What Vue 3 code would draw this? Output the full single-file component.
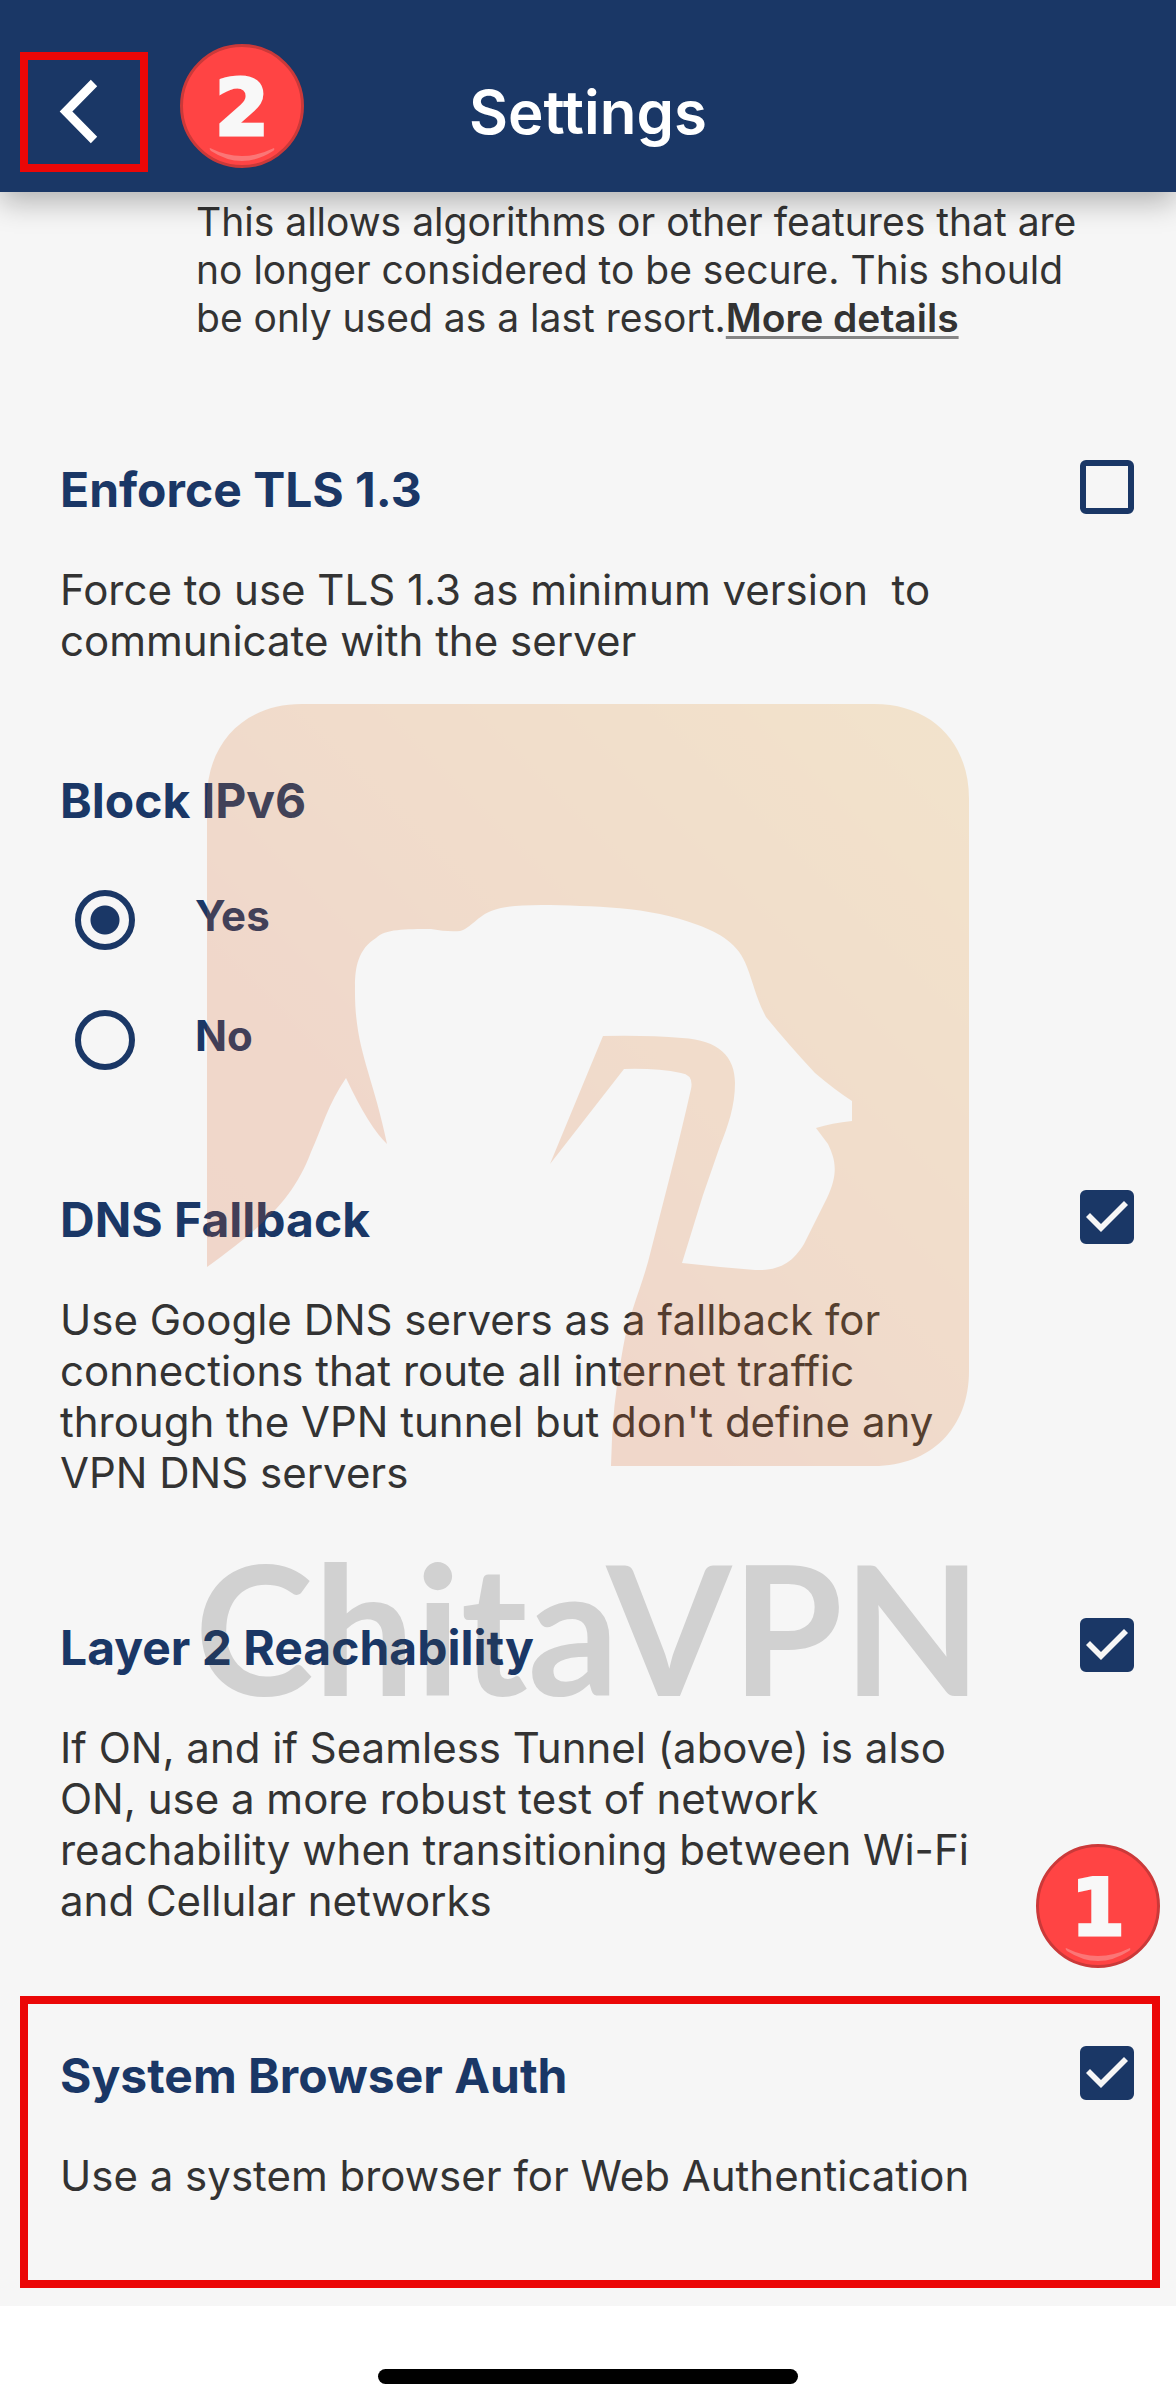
<template>
  <div class="settings-page">
    <header class="app-header">
      <div class="back-wrap">
        <button type="button" class="back-btn" aria-label="Back">
          <svg viewBox="0 0 112 104" width="112" height="104" aria-hidden="true">
            <polyline points="66,23 38,51.5 66,80" fill="none" stroke="#fff" stroke-width="9" />
          </svg>
        </button>
        <svg class="step-badge step-two" viewBox="0 0 124 124" aria-hidden="true">
          <circle cx="62" cy="62" r="60.5" />
          <path d="M30 104Q62 120 94 104Q95 106 93 107Q62 127 31 107Q29 105 30 104Z" />
          <text x="62" y="91">2</text>
        </svg>
      </div>
      <h1>Settings</h1>
    </header>

    <main class="content">
      <p class="intro">
        This allows algorithms or other features that are no longer considered to be secure. This should be only used as a last resort.<a href="#">More details</a>
      </p>

      <template v-for="s in settings" :key="s.id">
        <fieldset v-if="s.options" class="radio-group">
          <legend class="title">{{ s.title }}</legend>
          <label v-for="o in s.options" :key="o" class="radio-row">
            <input type="radio" :name="s.id" :value="o" v-model="s.value" />
            <span>{{ o }}</span>
          </label>
        </fieldset>

        <section v-else class="setting" :class="{ highlighted: s.highlighted }">
          <div class="setting-text">
            <label class="title" :for="s.id">{{ s.title }}</label>
            <p :id="s.id + '-desc'" class="desc">{{ s.desc }}</p>
          </div>
          <input type="checkbox" :id="s.id" v-model="s.value" :aria-describedby="s.id + '-desc'" />
          <svg v-if="s.highlighted" class="step-badge step-one" viewBox="0 0 124 124" aria-hidden="true">
            <circle cx="62" cy="62" r="60.5" />
            <path d="M30 104Q62 120 94 104Q95 106 93 107Q62 127 31 107Q29 105 30 104Z" />
            <text x="62" y="91">1</text>
          </svg>
        </section>
      </template>

      <!-- Marca de agua -->
      <div class="watermark" aria-hidden="true">
        <svg viewBox="0 0 762 762">
          <defs>
            <linearGradient id="wm" x1="0.1" y1="0.9" x2="1" y2="0">
              <stop offset="0" stop-color="#dc5c20" />
              <stop offset="0.25" stop-color="#dc6022" />
              <stop offset="0.4" stop-color="#dc6e24" />
              <stop offset="1" stop-color="#e69b28" />
            </linearGradient>
          </defs>
          <path
            fill="url(#wm)"
            d="M0 563V95C0 38 38 0 95 0H667C724 0 762 38 762 95V667C762 724 724 762 667 762H404
               Q405 700 416 644C422 610 432 590 441 558L462 476Q475 425 484 385Q487 371 474 369Q450 364 417 365
               L343 460L396 332Q440 331 475 334C512 336 528 353 528 379C528 402 521 422 513 442L496 491L475 559
               Q510 563 548 566C573 567 586 558 597 540L620 494C633 467 627 453 621 440L609 424Q625 419 645 417
               V397Q628 386 608 369Q581 340 559 313C549 294 547 281 540 263C532 240 513 229 491 221
               C442 202 385 202 334 201Q300 201 287 206C271 211 263 225 253 227Q240 228 224 225C198 225 178 225 169 234
               C151 245 148 264 148 282C147 345 165 367 180 440Q162 423 139 374C121 400 115 424 104 448
               C86 496 55 523 0 563Z"
          />
        </svg>
        <span>ChitaVPN</span>
      </div>
    </main>

    <footer class="home-area">
      <div class="home-indicator"></div>
    </footer>
  </div>
</template>

<script setup>
import { ref } from 'vue';

const settings = ref([
  {
    id: 'tls13',
    title: 'Enforce TLS 1.3',
    desc: 'Force to use TLS 1.3 as minimum version  to communicate with the server',
    value: false
  },
  { id: 'ipv6', title: 'Block IPv6', options: ['Yes', 'No'], value: 'Yes' },
  {
    id: 'dns',
    title: 'DNS Fallback',
    desc: "Use Google DNS servers as a fallback for connections that route all internet traffic through the VPN tunnel but don't define any VPN DNS servers",
    value: true
  },
  {
    id: 'layer2',
    title: 'Layer 2 Reachability',
    desc: 'If ON, and if Seamless Tunnel (above) is also ON, use a more robust test of network reachability when transitioning between Wi-Fi and Cellular networks',
    value: true
  },
  {
    id: 'browser',
    title: 'System Browser Auth',
    desc: 'Use a system browser for Web Authentication',
    value: true,
    highlighted: true
  }
]);
</script>

<style>
body { margin: 0; background: #fff; }
</style>

<style scoped>
* { box-sizing: border-box; }
.settings-page { font-family: Inter, "Liberation Sans", sans-serif; color: #333; }

.app-header {
  position: relative; z-index: 2;
  display: grid; grid-template-columns: 1fr auto 1fr; align-items: center;
  padding: 52px 20px 20px; background: #1a3766;
  box-shadow: 0 10px 28px rgba(0, 0, 0, 0.28);
}
.app-header h1 { margin: 0; color: #fff; font-size: 60px; line-height: 70px; font-weight: 600; }
.back-wrap { position: relative; display: flex; }
.back-btn { width: 128px; height: 120px; padding: 0; border: 8px solid #eb0707; background: none; }
.back-btn svg { display: block; }

.step-badge { position: absolute; width: 124px; height: 124px; }
.step-badge circle { fill: #ff4444; stroke: #cb3939; stroke-width: 3; }
.step-badge path { fill: #fb7676; }
.step-badge text {
  fill: #f8f8f8; stroke: #f8f8f8; stroke-width: 3;
  font-family: "DejaVu Sans", sans-serif; font-size: 78px; font-weight: 700; text-anchor: middle;
}
.step-two { left: 160px; top: -8px; }
.step-one { right: -26px; top: -202px; }

.content {
  position: relative; display: flex; flex-direction: column; gap: 90px;
  padding: 6px 42px 75px 60px; background: #f6f6f6;
}
.intro { margin: 0 44px 28px 136px; font-size: 39px; line-height: 48px; }
.intro a {
  color: inherit; font-weight: 600;
  text-decoration: underline 3px #858585; text-underline-offset: 4px;
}

.setting { position: relative; display: flex; align-items: flex-start; gap: 96px; padding-bottom: 30px; }
.setting-text { flex: 1; }
.title { display: block; padding: 0; color: #1a3766; font-size: 48px; line-height: 60px; font-weight: 700; }
.desc { margin: 44px 0 0; font-size: 42px; line-height: 51px; white-space: pre-wrap; }
.highlighted::after {
  content: ""; position: absolute; inset: -50px -26px -57px -40px;
  border: 8px solid #eb0707; pointer-events: none;
}

input { appearance: none; margin: 0; flex: none; border: 6px solid #1a3766; }
input[type="checkbox"] { position: relative; width: 54px; height: 54px; border-radius: 6px; }
input[type="checkbox"]:checked { background: #1a3766; }
input[type="checkbox"]:checked::before {
  content: ""; position: absolute; inset: -6px; background: #f6f6f6;
  clip-path: polygon(6px 27px, 10px 23px, 21px 34px, 44px 11px, 48px 15px, 21px 42px);
}
input[type="radio"] { width: 60px; height: 60px; border-radius: 50%; }
input[type="radio"]:checked { background: radial-gradient(circle, #1a3766 14px, transparent 15px); }

.radio-group { margin: -15px 0 0; padding: 0; border: 0; min-width: 0; }
.radio-group .title { margin-bottom: 29px; }
.radio-row {
  display: flex; align-items: flex-start; gap: 60px; padding: 30px 15px;
  color: #1a3766; font-size: 42px; line-height: 51px; font-weight: 700;
}

.watermark {
  position: absolute; top: 512px; left: 50%; width: 762px; margin-left: -381px;
  opacity: 0.2; pointer-events: none;
}
.watermark svg { display: block; width: 100%; }
.watermark span {
  display: flex; justify-content: center; margin-top: 52px; color: #414141; white-space: nowrap;
  font-family: Lato, "Liberation Sans", sans-serif; font-size: 180px; line-height: 216px; font-weight: 700;
}

.home-area { display: flex; justify-content: center; padding: 63px 0 24px; background: #fff; }
.home-indicator { width: 420px; height: 15px; border-radius: 8px; background: #000; }
</style>
